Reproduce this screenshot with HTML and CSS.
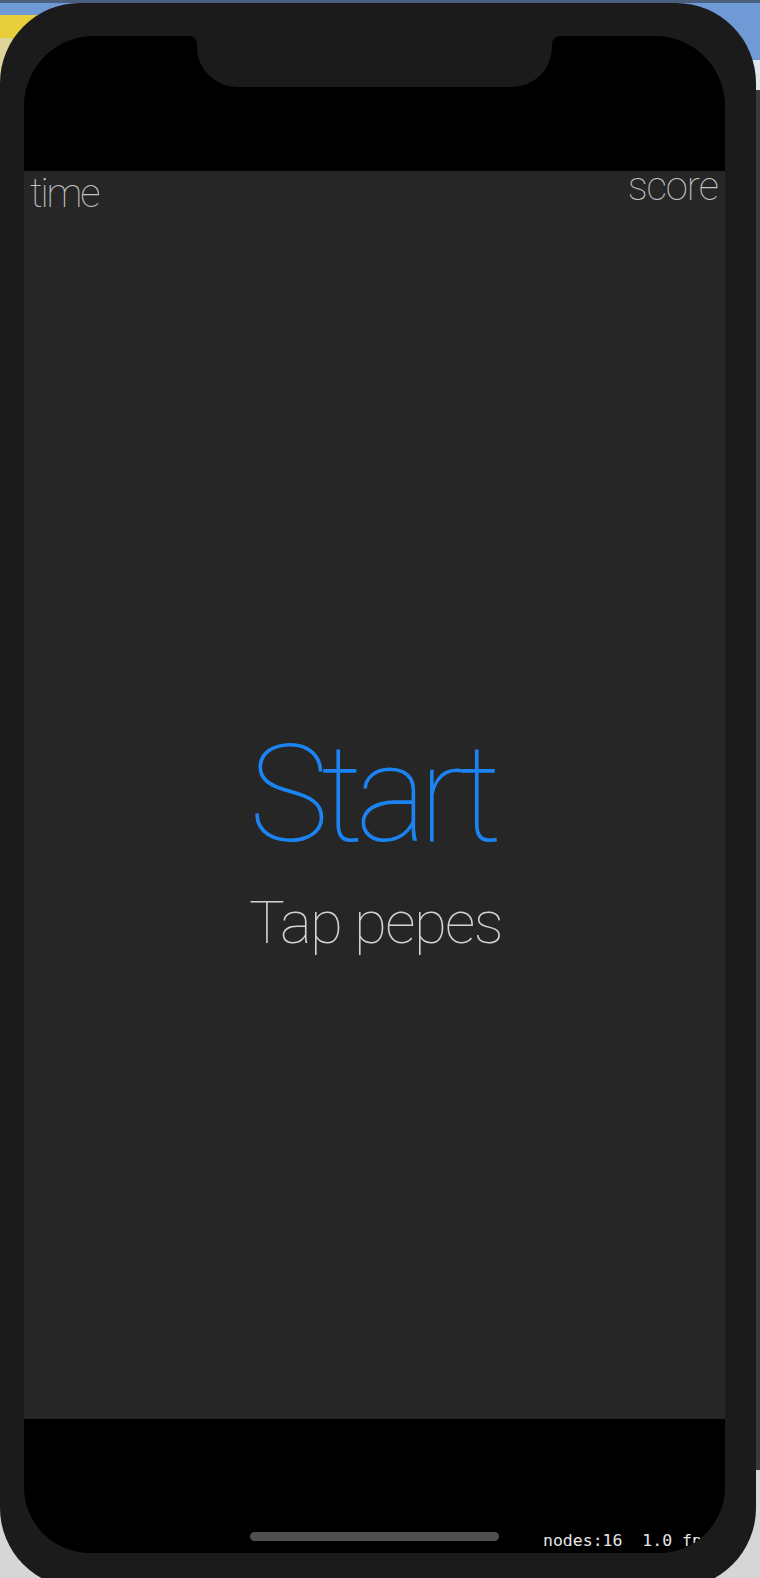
FILE: index.html
```html
<!DOCTYPE html>
<html>
<head>
<meta charset="utf-8">
<link rel="stylesheet" href="styles.css">
</head>
<body>
<div class="phone">
  <div class="screen">
    <div class="notch"></div>
    <div class="top-safe"></div>
    <div class="game">
      <div class="hud">
        <span class="hud-time">time</span>
        <span class="hud-score">score</span>
      </div>
      <div class="title">Start</div>
      <div class="subtitle">Tap pepes</div>
    </div>
    <div class="bottom-safe">
      <div class="home-indicator"></div>
    </div>
    <div class="debug">nodes:16  1.0 fps</div>
  </div>
</div>
</body>
</html>
```
FILE: styles.css
```css
html, body {
  margin: 0;
  padding: 0;
}

body {
  width: 760px;
  height: 1578px;
  overflow: hidden;
  background:
    linear-gradient(to bottom, #4b5f7e 0 3px, transparent 3px),
    linear-gradient(to bottom, transparent 15px, #e6cf3a 15px 38px, #ddd598 38px 120px, transparent 120px) left top / 80px 100% no-repeat,
    linear-gradient(to bottom, #6f9ad6 0 60px, #dfe6ee 60px 90px, #3a3a3a 90px 1470px, #d6d6d6 1470px);
}

.phone {
  width: 756px;
  height: 1585px;
  margin-top: 3px;
  box-sizing: border-box;
  padding: 33px 31px 0 24px;
  background: #1b1b1b;
  border-radius: 80px;
}

.screen {
  position: relative;
  width: 701px;
  height: 1517px;
  background: #000;
  border-radius: 70px 70px 66px 66px;
  overflow: hidden;
  display: flex;
  flex-direction: column;
}

.notch {
  position: absolute;
  left: 173px;
  top: 0;
  width: 355px;
  height: 51px;
  background: #1b1b1b;
  border-radius: 0 0 40px 40px;
}

.notch::before,
.notch::after {
  content: "";
  position: absolute;
  top: 0;
  width: 8px;
  height: 8px;
}

.notch::before {
  left: -8px;
  background: radial-gradient(circle at 0 100%, transparent 7.5px, #1b1b1b 8.5px);
}

.notch::after {
  right: -8px;
  background: radial-gradient(circle at 100% 100%, transparent 7.5px, #1b1b1b 8.5px);
}

.top-safe {
  height: 135px;
  flex: none;
}

.game {
  height: 1248px;
  flex: none;
  background: #262626;
  display: grid;
  grid-template-rows: 1fr auto 1fr;
  justify-items: center;
  font-family: Roboto, "Liberation Sans", sans-serif;
  font-weight: 100;
}

.hud {
  align-self: start;
  justify-self: stretch;
  display: flex;
  justify-content: space-between;
  align-items: flex-start;
  padding: 0 7px 0 6px;
  color: #c4c4c4;
  font-size: 40px;
  line-height: 1;
}

.hud-time {
  margin-top: 3px;
  letter-spacing: -2.2px;
}

.hud-score {
  margin-top: -4px;
  letter-spacing: -1px;
}

.title {
  color: #1b84f2;
  font-size: 135px;
  line-height: 1;
  letter-spacing: -8px;
  padding-right: 6px;
}

.subtitle {
  align-self: start;
  margin-top: 30px;
  padding-left: 2px;
  color: #d2d2d2;
  font-size: 60px;
  line-height: 1;
  letter-spacing: -1.6px;
}

.bottom-safe {
  flex: 1;
  display: flex;
  justify-content: center;
  align-items: flex-end;
  padding-bottom: 12px;
}

.home-indicator {
  width: 249px;
  height: 9px;
  border-radius: 5px;
  background: #4f4f4f;
}

.debug {
  position: absolute;
  left: 519px;
  bottom: 4px;
  color: #e6e6e6;
  font-family: "DejaVu Sans Mono", "Liberation Mono", monospace;
  font-size: 16.5px;
  line-height: 16px;
  white-space: pre;
}
```
